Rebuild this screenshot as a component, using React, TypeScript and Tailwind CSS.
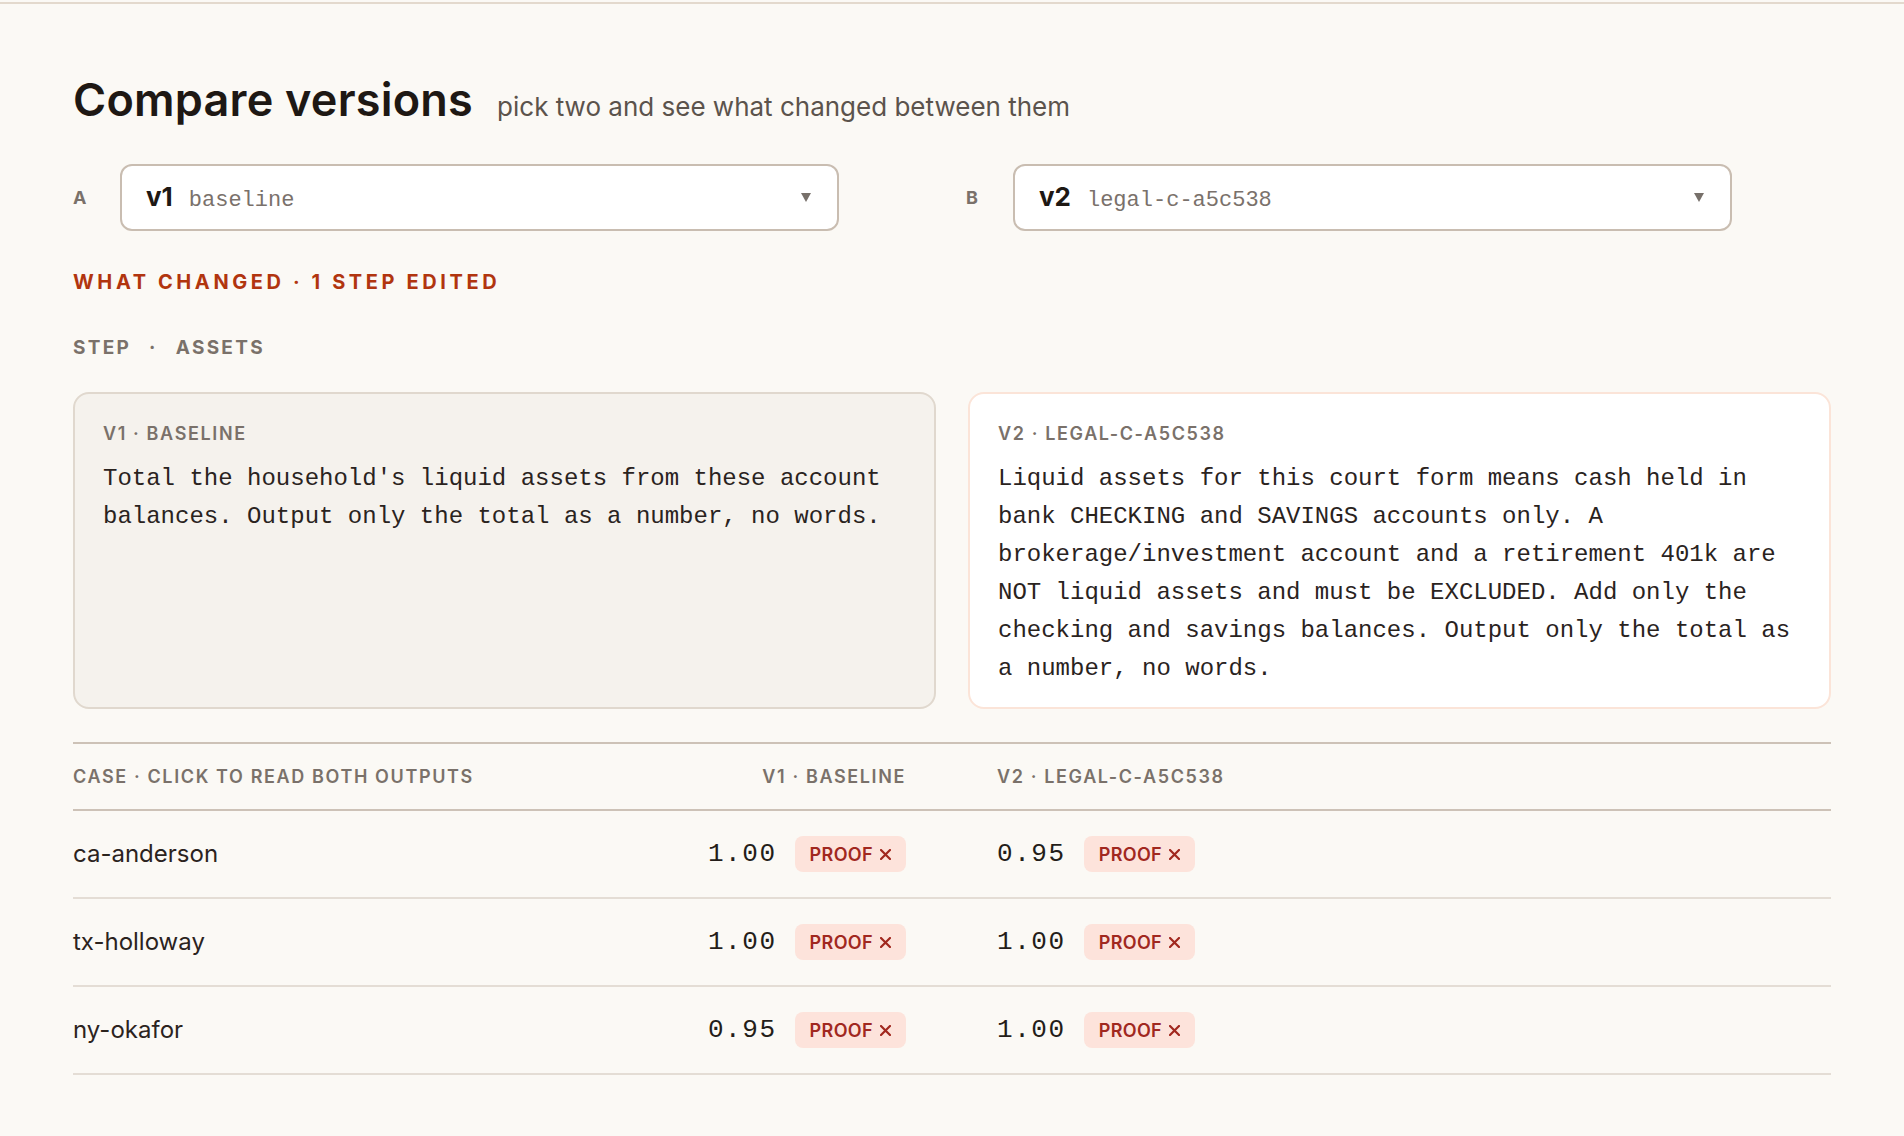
import React from 'react';

const mono = "font-['Liberation_Mono',monospace]";

type Row = { id: string; a: string; b: string };

const rows: Row[] = [
  { id: 'ca-anderson', a: '1.00', b: '0.95' },
  { id: 'tx-holloway', a: '1.00', b: '1.00' },
  { id: 'ny-okafor', a: '0.95', b: '1.00' },
];

const Picker: React.FC<{ label: string; ver: string; name: string }> = ({ label, ver, name }) => (
  <div className="flex items-center gap-6">
    <span className="w-[23px] text-[18px] font-bold text-[#7a716a]">{label}</span>
    <div className="flex h-[67px] w-[719px] items-center justify-between rounded-xl border-2 border-[#c9bdb1] bg-white pl-6 pr-[26px]">
      <div className="flex items-baseline gap-[16px]">
        <span className="text-[26px] font-bold leading-none text-[#1e1814]">{ver}</span>
        <span className={`${mono} text-[22px] leading-none text-[#7a716b]`}>{name}</span>
      </div>
      <svg width="10" height="9" viewBox="0 0 10 9">
        <path d="M0 0h10L5 9z" fill="#77706a" />
      </svg>
    </div>
  </div>
);

const Score: React.FC<{ value: string }> = ({ value }) => (
  <>
    <span className={`${mono} text-[26px] tracking-[0.06em] text-[#241d19]`}>{value}</span>
    <span className="flex h-9 items-center gap-[7px] rounded-lg bg-[#fde3db] px-[15px] text-[18px] font-semibold tracking-[0.02em] text-[#a1281f]">
      PROOF
      <svg width="11" height="11" viewBox="0 0 11 11">
        <path d="M1 1l9 9M10 1l-9 9" stroke="#a1281f" strokeWidth="2.2" strokeLinecap="round" />
      </svg>
    </span>
  </>
);

const App: React.FC = () => {
  return (
    <div className="min-h-screen bg-[#fbf9f5] pt-[2px] font-['Inter',sans-serif] text-[#221b17]">
      <div className="border-t-2 border-[#e3d9cd] px-[73px] pb-[60px] pt-[72px]">
        <div className="flex items-baseline gap-6">
          <h1 className="text-[45px] font-semibold leading-[48px] tracking-[0.005em] text-[#1e1814]">Compare versions</h1>
          <p className="text-[26px] text-[#5b534c]">pick two and see what changed between them</p>
        </div>

        <div className="mt-[38px] grid grid-cols-2 gap-7">
          <Picker label="A" ver="v1" name="baseline" />
          <Picker label="B" ver="v2" name="legal-c-a5c538" />
        </div>

        <div className="mt-[39px] text-[20px] font-bold leading-6 tracking-[0.18em] text-[#b1350f]">
          WHAT CHANGED · 1 STEP EDITED
        </div>

        <div className="mt-[42px] flex gap-[18px] text-[19px] font-bold leading-6 tracking-[0.12em] text-[#7a716a]">
          <span>STEP</span>
          <span>·</span>
          <span>ASSETS</span>
        </div>

        <div className="mt-[32px] grid grid-cols-2 gap-8">
          <div className="rounded-2xl border-2 border-[#e0d8ce] bg-[#f5f2ed] px-7 pb-[19px] pt-7">
            <div className="text-[18px] font-semibold leading-6 tracking-[0.09em] text-[#7a716a]">V1 · BASELINE</div>
            <p className={`${mono} mt-[14px] text-[24px] leading-[38px] text-[#2a231e]`}>
              Total the household's liquid assets from these account balances. Output only the total as a number, no words.
            </p>
          </div>
          <div className="rounded-2xl border-2 border-[#fbe4d8] bg-white px-7 pb-[19px] pt-7">
            <div className="text-[18px] font-semibold leading-6 tracking-[0.09em] text-[#7a716a]">V2 · LEGAL-C-A5C538</div>
            <p className={`${mono} mt-[14px] text-[24px] leading-[38px] text-[#2a231e]`}>
              Liquid assets for this court form means cash held in bank CHECKING and SAVINGS accounts only. A brokerage/investment account and a retirement 401k are NOT liquid assets and must be EXCLUDED. Add only the checking and savings balances. Output only the total as a number, no words.
            </p>
          </div>
        </div>

        <div className="mt-[33px]">
          <div className="grid h-[69px] grid-cols-[1fr_auto_834px] items-center gap-x-[91px] border-y-2 border-[#cdc2b7] text-[18px] font-semibold tracking-[0.09em] text-[#7a716a]">
            <span>CASE · CLICK TO READ BOTH OUTPUTS</span>
            <span className="justify-self-end">V1 · BASELINE</span>
            <span>V2 · LEGAL-C-A5C538</span>
          </div>
          {rows.map((r) => (
            <div
              key={r.id}
              className="grid h-[88px] cursor-pointer grid-cols-[1fr_auto_834px] items-center gap-x-[91px] border-b-2 border-[#e4ddd5]"
            >
              <span className="text-[24px] text-[#2b231e]">{r.id}</span>
              <div className="flex items-center justify-end gap-[18px]">
                <Score value={r.a} />
              </div>
              <div className="flex items-center gap-[18px]">
                <Score value={r.b} />
              </div>
            </div>
          ))}
        </div>
      </div>
    </div>
  );
};

export default App;
